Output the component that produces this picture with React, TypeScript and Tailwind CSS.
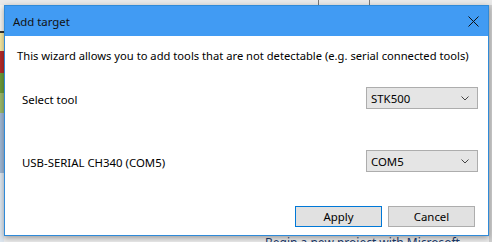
import React from "react";

function Chevron() {
  return (
    <svg width="8" height="5" viewBox="0 0 8 5" className="block">
      <path d="M0.5 0.5 L4 4 L7.5 0.5" fill="none" stroke="#444" strokeWidth="1" />
    </svg>
  );
}

function Select({ value }: { value: string }) {
  return (
    <div className="w-[112px] h-[22px] border border-[#adadad] bg-[#e5e5e5] flex items-center justify-between pl-[4px] pr-[8px]">
      <span className="text-[11.4px] text-black leading-none pt-[1px]">{value}</span>
      <Chevron />
    </div>
  );
}

export default function App() {
  return (
    <div
      className="w-[492px] h-[242px] relative overflow-hidden bg-[#ececec]"
      style={{ fontFamily: '"Segoe UI", "Noto Sans", "Open Sans", sans-serif' }}
    >
      {/* background app hints */}
      <div className="absolute left-0 top-0 w-[492px] h-[5px] bg-[#e9e9e9]">
        <div className="absolute left-[318px] top-0 w-px h-[5px] bg-[#777]" />
        <div className="absolute left-[369px] top-0 w-px h-[5px] bg-[#777]" />
      </div>
      <div className="absolute left-0 top-[5px] w-[4px] h-[237px] flex flex-col">
        <div className="h-[26px] bg-[#f3f3ef]" />
        <div className="h-[2px] bg-[#333]" />
        <div className="h-[18px] bg-[#f4e6a0]" />
        <div className="h-[22px] bg-[#b32a2a]" />
        <div className="h-[20px] bg-[#6a9a3a]" />
        <div className="h-[20px] bg-[#9ab86a]" />
        <div className="h-[60px] bg-[#9fb7d4]" />
        <div className="flex-1 bg-[#dde6ef]" />
      </div>
      <div className="absolute left-[489px] top-[5px] w-[3px] h-[237px] bg-[#cfcfcf]" />
      <div className="absolute left-[265px] top-[236px] text-[12px] text-[#1b3a6b] leading-[14px] whitespace-nowrap">
        Begin a new project with Microsoft
      </div>

      {/* dialog window */}
      <div className="absolute left-[4px] top-[5px] w-[485px] h-[231px] border border-[#2f8ad8] bg-white flex flex-col shadow-[0_2px_6px_rgba(0,0,0,0.35)]">
        <div className="h-[30px] bg-[#419bf3] flex items-center justify-between pl-[8px] pr-[9px] shrink-0">
          <span className="text-[11.4px] text-[#111] leading-none pt-[1px]">Add target</span>
          <svg width="11" height="11" viewBox="0 0 11 11" className="block">
            <path d="M0.5 0.5 L10.5 10.5 M10.5 0.5 L0.5 10.5" stroke="#111" strokeWidth="1" fill="none" />
          </svg>
        </div>
        <div className="flex-1 flex flex-col text-[11.4px] text-black">
          <div className="pl-[12px] mt-[12px] leading-[16px] whitespace-nowrap text-[11.2px]">
            This wizard allows you to add tools that are not detectable (e.g. serial connected tools)
          </div>
          <div className="flex items-center justify-between pl-[17px] pr-[10px] mt-[23px]">
            <span className="leading-none pt-[3px]">Select tool</span>
            <Select value="STK500" />
          </div>
          <div className="flex items-center justify-between pl-[17px] pr-[10px] mt-[41px]">
            <span className="leading-none pt-[3px]">USB-SERIAL CH340 (COM5)</span>
            <Select value="COM5" />
          </div>
          <div className="flex justify-end gap-[6px] pr-[13px] mt-[34px]">
            <button className="w-[87px] h-[21px] border border-[#0078d7] bg-[#e1e1e1] text-[11.4px] leading-none text-black">
              Apply
            </button>
            <button className="w-[87px] h-[21px] border border-[#adadad] bg-[#e1e1e1] text-[11.4px] leading-none text-black">
              Cancel
            </button>
          </div>
        </div>
      </div>
    </div>
  );
}
